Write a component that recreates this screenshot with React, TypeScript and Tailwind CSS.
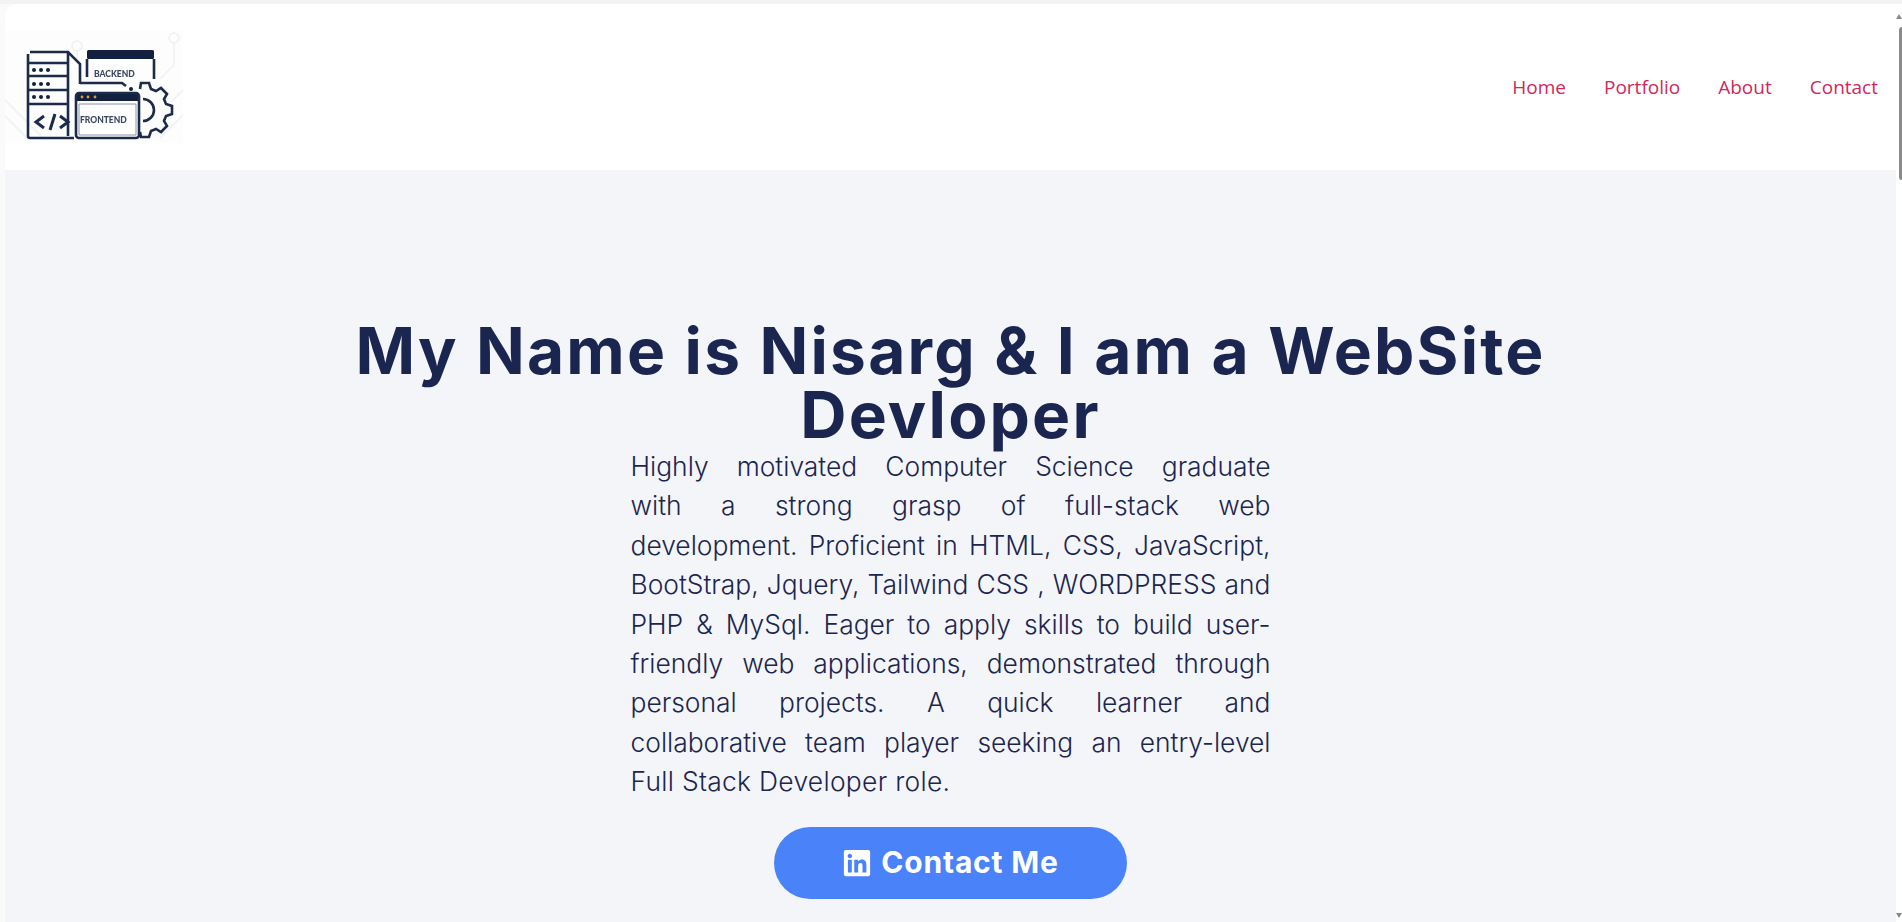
import { FaLinkedin } from "react-icons/fa"

const NAV_LINKS = ["Home", "Portfolio", "About", "Contact"]

const BODY_LINES = [
  "Highly motivated Computer Science graduate",
  "with a strong grasp of full-stack web",
  "development. Proficient in HTML, CSS, JavaScript,",
  "BootStrap, Jquery, Tailwind CSS , WORDPRESS and",
  "PHP & MySql. Eager to apply skills to build user-",
  "friendly web applications, demonstrated through",
  "personal projects. A quick learner and",
  "collaborative team player seeking an entry-level",
]

/* viewBox uses page coordinates, easier to compare against the screenshot */
const Logo = () => (
  <svg width="180" height="166" viewBox="5 4 180 166" fill="none" stroke="#1c2b4a" strokeWidth="2.6" className="blur-[0.6px]">
    <rect x="5" y="30" width="178" height="113" fill="#fdfdfd" stroke="none" />
    <g stroke="#eef0f3" strokeWidth="1.5">
      <circle cx="77" cy="46" r="5" />
      <circle cx="174" cy="38" r="5" />
      <path d="M174 43v22l-14 14M77 51v10M5 100l38 38M5 116l22 22M160 138l23-23M183 90l-12 12" />
    </g>
    <path d="M30 52h38l12 12v20M68 52v84M28 54v82a2 2 0 0 0 2 2h44" />
    <path d="M28 63h40M28 76h40M28 90h40M28 104h40" />
    <g fill="#12203f" stroke="none">
      <circle cx="34" cy="70" r="2" /><circle cx="41" cy="70" r="2" /><circle cx="48" cy="70" r="2" />
      <circle cx="34" cy="84" r="2" /><circle cx="41" cy="84" r="2" /><circle cx="48" cy="84" r="2" />
      <circle cx="34" cy="97" r="2" /><circle cx="41" cy="97" r="2" /><circle cx="48" cy="97" r="2" />
      <rect x="87" y="50" width="67" height="9" rx="1.5" />
      <rect x="76" y="93" width="63" height="8" rx="1.5" />
      <circle cx="131" cy="89" r="2" />
    </g>
    <path d="M44 116l-8 6 8 6M50 130l5-16M60 116l8 6-8 6" strokeWidth="3" />
    <path d="M87 59v18M154 59v20M80 83h42l4 3" />
    <rect x="76" y="93" width="63" height="45" rx="3" />
    <path d="M79 104h57v31H79z" stroke="#8b93a3" strokeWidth="1" />
    <path d="M140 89l1-6h8l2 6 5 2 5-3 6 6-3 5 2 5 6 2v8l-6 2-2 5 3 5-6 6-5-3-5 2-2 6h-8l-1-5" />
    <path d="M143 99a11 11 0 0 1 0 22" />
    <text x="94" y="77" stroke="none" fill="#3b4660" fontSize="8.5" fontWeight="900" fontFamily="Lato, sans-serif">BACKEND</text>
    <text x="80" y="123" stroke="none" fill="#3b4660" fontSize="8.5" fontWeight="900" fontFamily="Lato, sans-serif">FRONTEND</text>
    <g fill="#e39a3b" stroke="none">
      <circle cx="82" cy="97" r="1.4" /><circle cx="88" cy="97" r="1.4" /><circle cx="95" cy="97" r="1.4" />
    </g>
  </svg>
)

export default function App() {
  return (
    <div className="h-[922px] overflow-hidden bg-[#f3f3f3] pt-[4px]">
      <div className="flex h-[918px] bg-[#fafafa]">
        <div className="w-[5px] shrink-0" />
        <div className="flex min-w-0 flex-1 flex-col overflow-hidden rounded-tl-xl bg-[#f4f5f9]">
          <header className="flex h-[166px] shrink-0 items-center justify-between bg-white pr-[18px]">
            <Logo />
            <nav className="flex gap-[38px] font-['Open_Sans',sans-serif] text-[19px] text-[#d0285c]">
              {NAV_LINKS.map((link) => (
                <a key={link} href="#">
                  {link}
                </a>
              ))}
            </nav>
          </header>
          <main className="flex flex-col items-center pt-[149px] font-['Inter',sans-serif] text-[#1b2650]">
            <h1 className="w-[1230px] text-center text-[64px] leading-[64px] font-bold tracking-[2.2px]">
              My Name is Nisarg &amp; I am a WebSite Devloper
            </h1>
            <div className="w-[640px] text-[26.4px] leading-[39.4px] font-light">
              {BODY_LINES.map((line) => (
                <p key={line} className="text-justify [text-align-last:justify]">
                  {line}
                </p>
              ))}
              <p className="tracking-[0.3px]">Full Stack Developer role.</p>
            </div>
            <a
              href="#"
              className="mt-[25px] flex h-[72px] w-[353px] shrink-0 items-center justify-center gap-[9px] rounded-full bg-[#4a82fa] text-[30px] font-bold tracking-[0.8px] text-white"
            >
              <FaLinkedin className="size-[30px]" />
              Contact Me
            </a>
          </main>
        </div>
        {/* window scrollbar */}
        <div className="flex w-[6px] shrink-0 flex-col items-end bg-white pt-[10px] pb-[4px]">
          <div className="h-0 w-0 border-x-[3px] border-b-[5px] border-x-transparent border-b-[#8a8a8a]" />
          <div className="mt-[8px] h-[153px] w-[3px] rounded-l-[3px] bg-[#8a8a8a]" />
          <div className="mt-auto h-0 w-0 border-x-[3px] border-t-[5px] border-x-transparent border-t-[#8a8a8a]" />
        </div>
      </div>
    </div>
  )
}
